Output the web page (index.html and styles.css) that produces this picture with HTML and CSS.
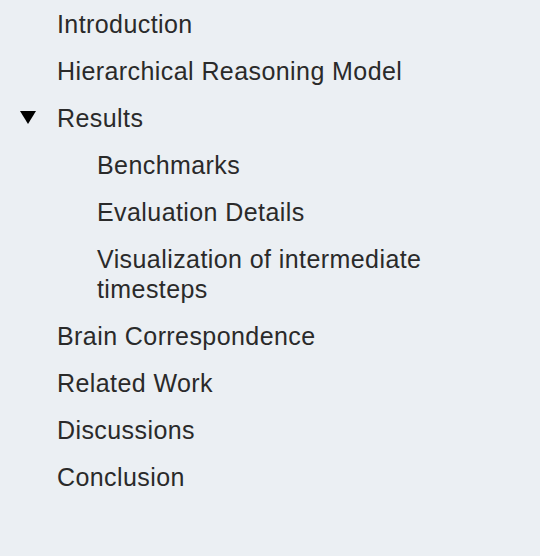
FILE: index.html
```html
<!DOCTYPE html>
<html lang="en">
<head>
<meta charset="utf-8">
<title>Contents</title>
<link rel="stylesheet" href="styles.css">
</head>
<body>
<nav class="toc">
  <ul class="list">
    <li class="item"><span class="label">Introduction</span></li>
    <li class="item"><span class="label">Hierarchical Reasoning Model</span></li>
    <li class="item open">
      <div class="row"><span class="marker"></span><span class="label">Results</span></div>
      <ul class="list sub">
        <li class="item"><span class="label">Benchmarks</span></li>
        <li class="item"><span class="label">Evaluation Details</span></li>
        <li class="item"><span class="label">Visualization of intermediate timesteps</span></li>
      </ul>
    </li>
    <li class="item"><span class="label">Brain Correspondence</span></li>
    <li class="item"><span class="label">Related Work</span></li>
    <li class="item"><span class="label">Discussions</span></li>
    <li class="item"><span class="label">Conclusion</span></li>
  </ul>
</nav>
</body>
</html>
```
FILE: styles.css
```css
html, body {
  margin: 0;
  padding: 0;
  background: #ebeff3;
}
body {
  width: 540px;
  height: 556px;
  font-family: "Liberation Sans", Arial, sans-serif;
  font-size: 25px;
  line-height: 30px;
  letter-spacing: 0.42px;
  color: #2a2a2a;
}
.toc {
  padding: 9px 60px 0 57px;
}
.list {
  list-style: none;
  margin: 0;
  padding: 0;
  display: flex;
  flex-direction: column;
  gap: 17px;
}
.sub {
  padding-left: 40px;
  margin-top: 17px;
}
.row {
  position: relative;
}
.marker {
  position: absolute;
  left: -37px;
  top: 8px;
  width: 0;
  height: 0;
  border-left: 8px solid transparent;
  border-right: 8px solid transparent;
  border-top: 13px solid #000;
}
```
